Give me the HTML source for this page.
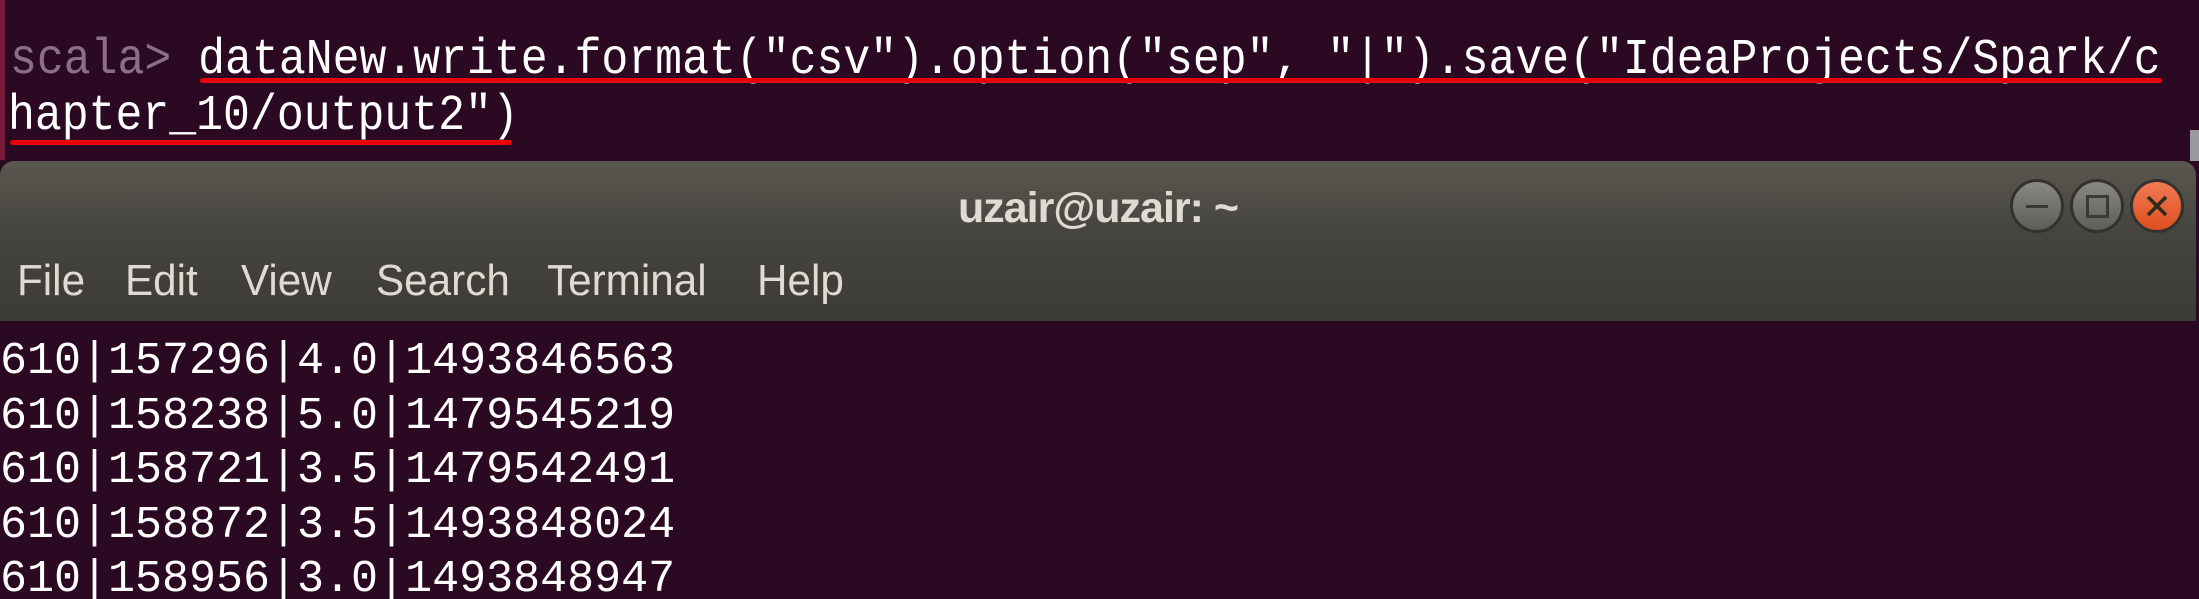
<!DOCTYPE html>
<html><head><meta charset="utf-8"><style>
html,body{margin:0;padding:0;width:2199px;height:599px;overflow:hidden;background:#2c0922;position:relative;font-family:"Liberation Mono",monospace}
.t{position:absolute;white-space:pre;line-height:1}
.ul{position:absolute;height:5px;background:#e8000a;border-radius:3px}
.win{position:absolute;left:0;top:161px;width:2196px;height:160px;border-radius:14px 14px 0 0;background:linear-gradient(#59574f,#46443f 45%,#3c3b37);}
.btn{position:absolute;width:48px;height:48px;border-radius:50%;border:3px solid #33322e;top:18px}
.g{background:linear-gradient(#8a8883,#5f5d58)}
.m{position:absolute;top:98px;font-family:'Liberation Sans',sans-serif;font-size:44px;color:#dfdbd2;line-height:1;transform:scaleX(0.96);transform-origin:left}
</style></head><body>
<div style="position:absolute;left:0;top:0;width:5px;height:160px;background:#7a1a3a"></div>
<div style="position:absolute;left:2190px;top:130px;width:9px;height:31px;background:#9c9aa0"></div>
<div class="t" style="left:10px;top:36px;font-size:44.8px;color:#fff;transform:scaleY(1.12);transform-origin:top"><span style="color:#8b6e8c">scala&gt;</span> dataNew.write.format("csv").option("sep", "|").save("IdeaProjects/Spark/c</div>
<div class="t" style="left:8px;top:92px;font-size:44.8px;color:#fff;transform:scaleY(1.12);transform-origin:top">hapter_10/output2")</div>
<div class="ul" style="left:200px;top:78px;width:1962px"></div>
<div class="ul" style="left:10px;top:140px;width:502px"></div>
<div class="win">
<div class="t" style="left:0;width:2196px;text-align:center;top:26px;font-family:'Liberation Sans',sans-serif;font-weight:bold;font-size:43px;color:#dfdbd2;letter-spacing:-1px">uzair@uzair: ~</div>
<div class="btn g" style="left:2010px"><div style="position:absolute;left:13px;top:23px;width:22px;height:3px;background:#3a3935"></div></div>
<div class="btn g" style="left:2070px"><div style="position:absolute;left:13px;top:13px;width:17px;height:17px;border:3px solid #3a3935"></div></div>
<div class="btn" style="left:2130px;background:linear-gradient(#f07a52,#df4f1e)">
<svg width="48" height="48" viewBox="0 0 48 48" style="position:absolute;left:0;top:0"><path d="M15 15L33 33M33 15L15 33" stroke="#2d2a1e" stroke-width="3.5"/></svg></div>
<div class="m" style="left:17px">File</div>
<div class="m" style="left:125px">Edit</div>
<div class="m" style="left:241px">View</div>
<div class="m" style="left:376px">Search</div>
<div class="m" style="left:547px">Terminal</div>
<div class="m" style="left:757px">Help</div>
</div>
<div class="t" style="left:0;top:335px;font-size:45px;color:#fff;line-height:54.5px">610|157296|4.0|1493846563
610|158238|5.0|1479545219
610|158721|3.5|1479542491
610|158872|3.5|1493848024
610|158956|3.0|1493848947</div>
</body></html>
